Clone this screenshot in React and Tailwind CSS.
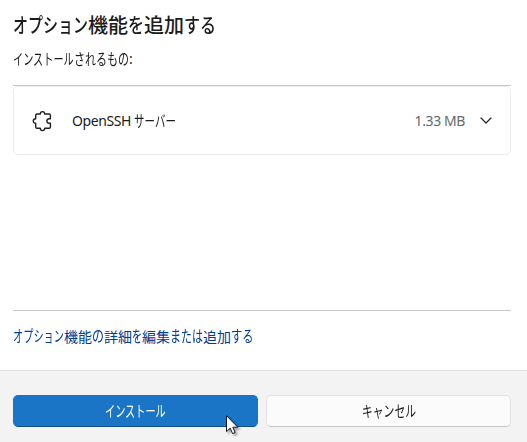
const JP = "font-['Noto_Sans','Noto_Sans_CJK_JP',sans-serif]"

// Each run is [text, width]; kana are set taller and narrower than the kanji beside them
function Runs({ runs, size, kana = 1.1 }) {
  return (
    <span className="inline-flex items-center whitespace-nowrap">
      {runs.map(([text, width], i) => {
        const fontSize = /^[\u3040-\u30ff]+$/.test(text) ? size * kana : size
        return (
          <span key={i} className="block" style={{ width, fontSize }}>
            <span
              className="block w-max origin-left font-['Noto_Sans_CJK_JP',sans-serif]"
              style={{ transform: `scaleX(${width / (text.length * fontSize)})` }}
            >
              {text}
            </span>
          </span>
        )
      })}
    </span>
  )
}

function PuzzleIcon() {
  return (
    <svg className="h-[22px] w-5 shrink-0" viewBox="0 0 20 22" fill="none" stroke="#1f1f1f" strokeWidth="1.4" strokeLinejoin="round">
      <path d="M5 4H8.3C8.3 2.4 9.2 1.6 10.5 1.6S12.7 2.4 12.7 4H17.1Q18.4 4 18.4 5.3V8.7H17.2C15.7 8.7 14.9 9.7 14.9 11S15.7 13.3 17.2 13.3H18.4V17Q18.4 18.3 17.1 18.3H12.7C12.7 19.8 11.8 20.6 10.5 20.6S8.3 19.8 8.3 18.3H5Q3.7 18.3 3.7 17V13.3C2.3 13.3 1.3 12.4 1.3 11S2.3 8.7 3.7 8.7V5.3Q3.7 4 5 4Z" />
    </svg>
  )
}

function ChevronDown() {
  return (
    <svg className="h-[7px] w-3 shrink-0" viewBox="0 0 12 7" fill="none" stroke="#2b2b2b" strokeWidth="1.3" strokeLinecap="round" strokeLinejoin="round">
      <path d="M1 1L6 6L11 1" />
    </svg>
  )
}

function Cursor() {
  return (
    <svg className="pointer-events-none absolute left-[226px] top-[415px] h-5 w-3.5 drop-shadow-[2px_2px_1px_rgba(0,0,0,0.35)]" viewBox="0 0 14 20">
      <path d="M.5.7V16.6L4.2 13.1L6.6 18.6L9.1 17.5L6.8 12.2H11.8Z" fill="#fff" stroke="#111827" strokeWidth="1" />
    </svg>
  )
}

export default function App() {
  return (
    <div className={`relative flex h-[442px] w-[527px] flex-col overflow-hidden bg-white text-[#1b1b1b] ${JP}`}>
      <main className="flex h-[370px] flex-col pl-[13px] pr-4">
        <h1 className="mt-2.5 flex h-[29px] items-center text-[20px] font-medium leading-none">
          <Runs size={20} kana={1} runs={[['オプション', 75], ['機能', 40], ['を', 16], ['追加', 40], ['する', 32]]} />
        </h1>
        <p className="mt-2.5 flex h-5 items-center text-[14px] leading-none">
          <Runs size={14} runs={[['インストール', 61], ['されるもの', 55]]} />:
        </p>

        <div className="mt-4 h-[226px] border-y border-[#c6c6c6]">
          <div className="flex h-[69px] items-center rounded-[5px] border border-[#ededed] pl-[18px] pr-[18px] text-[14px] tracking-[-0.4px]">
            <PuzzleIcon />
            <span className="ml-5 flex grow items-center whitespace-pre leading-none">
              OpenSSH{' '}
              <span className="tracking-normal"><Runs size={14} runs={[['サーバー', 42]]} /></span>
            </span>
            <span className="text-[#686868]">1.33 MB</span>
            <span className="ml-[15px]"><ChevronDown /></span>
          </div>
        </div>

        <a href="#" className="mt-[15px] flex h-5 items-center text-[14px] leading-none text-[#003e92]">
          <Runs
            size={14}
            runs={[['オプション', 51], ['機能', 28], ['の', 12], ['詳細', 28], ['を', 10], ['編集', 28], ['または', 33], ['追加', 28], ['する', 22.5]]}
          />
        </a>
      </main>

      <footer className="flex grow gap-2 border-t border-[#e2e2e2] bg-[#f3f3f3] px-[13px] pt-6 text-[14px] leading-none">
        <button className="flex h-8 w-[245px] items-center justify-center rounded-[5px] border border-[#1a75c7] border-b-[#124e86] bg-[#1a75c7] text-white">
          <Runs size={14} runs={[['インストール', 61]]} />
        </button>
        <button className="flex h-8 w-[245px] items-center justify-center rounded-[5px] border border-[#e2e2e2] border-b-[#c6c6c6] bg-[#fbfbfb]">
          <Runs size={14} runs={[['キャンセル', 54]]} />
        </button>
      </footer>

      <Cursor />
    </div>
  )
}
